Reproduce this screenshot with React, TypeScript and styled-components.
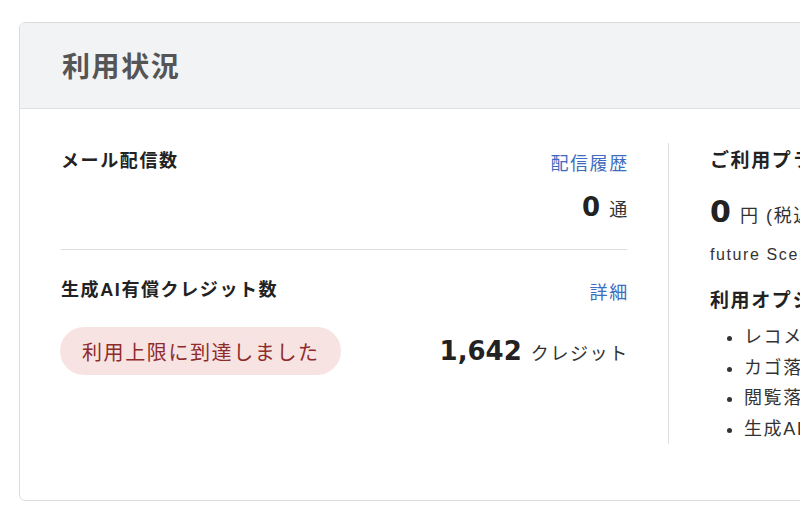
import React from 'react';
import styled, { createGlobalStyle } from 'styled-components';

const GlobalStyle = createGlobalStyle`
  html, body {
    margin: 0;
    padding: 0;
    background: #fff;
    overflow: hidden;
  }
  body {
    font-family: "Liberation Sans", "Noto Sans CJK JP", sans-serif;
    color: #222;
    letter-spacing: 0.1em;
  }
`;

const Page = styled.div`
  padding: 22px 0 0 19px;
  width: 1200px;
`;

const Card = styled.section`
  width: 1100px;
  border: 1px solid #dcdcdc;
  border-radius: 6px;
  background: #fff;
  overflow: hidden;
`;

const CardHeader = styled.header`
  height: 85px;
  display: flex;
  align-items: center;
  padding: 0 42px;
  background: #f2f3f5;
  border-bottom: 1px solid #e0e1e3;
`;

const CardTitle = styled.h2`
  margin: 0 0 2px;
  font-size: 28px;
  font-weight: 700;
  color: #555;
`;

const CardBody = styled.div`
  display: flex;
  padding: 34px 41px 56px;
`;

const LeftCol = styled.div`
  width: 566px;
  flex-shrink: 0;
`;

const ColDivider = styled.div`
  width: 1px;
  background: #dedede;
  margin: 0 41px;
  flex-shrink: 0;
`;

const RightCol = styled.div`
  flex: 1;
`;

const Section = styled.div<{ $first?: boolean }>`
  padding: ${({ $first }) => ($first ? '0 0 24px' : '22px 0 0')};
  border-bottom: ${({ $first }) => ($first ? '1px solid #dedede' : 'none')};
`;

const LabelRow = styled.div`
  height: 32px;
  display: flex;
  justify-content: space-between;
  align-items: center;
`;

const Label = styled.div`
  font-size: 18px;
  font-weight: 700;
  color: #222;
`;

const Link = styled.a`
  font-size: 18px;
  color: #3d6cc0;
  text-decoration: none;
  padding-top: 6px;
  margin-right: -1.8px;
  cursor: pointer;
`;

const ValueRow = styled.div<{ $gap: number }>`
  margin-top: ${({ $gap }) => $gap}px;
  min-height: 36px;
  display: flex;
  align-items: center;
  justify-content: space-between;
`;

const Value = styled.div`
  margin-left: auto;
  margin-right: -1.8px;
  display: flex;
  align-items: baseline;
  gap: 9px;
`;

const Num = styled.span<{ $size?: number }>`
  font-family: "DejaVu Sans", "Liberation Sans", sans-serif;
  font-size: ${({ $size }) => $size ?? 26}px;
  font-weight: 700;
  letter-spacing: 0;
  color: #222;
`;

const Unit = styled.span`
  font-size: 18px;
  color: #333;
`;

const Pill = styled.span`
  display: inline-flex;
  align-items: center;
  height: 48px;
  padding: 0 21px 0 22px;
  margin-left: -1px;
  border-radius: 24px;
  background: #f8e3e3;
  color: #8e2b2b;
  font-size: 20px;
`;

const SubTitle = styled.h3<{ $gap?: number }>`
  margin: ${({ $gap }) => $gap ?? 0}px 0 0;
  font-size: 19px;
  line-height: 36px;
  font-weight: 700;
  color: #222;
  white-space: nowrap;
`;

const PriceRow = styled.div`
  margin-top: 15px;
  height: 40px;
  display: flex;
  align-items: baseline;
  gap: 9px;
  white-space: nowrap;
`;

const Note = styled.div`
  margin-top: 8px;
  font-size: 16px;
  line-height: 26px;
  color: #333;
  white-space: nowrap;
`;

const OptionList = styled.ul`
  margin: 3px 0 0;
  padding-left: 34px;
`;

const OptionItem = styled.li`
  font-size: 18px;
  line-height: 30.5px;
  color: #333;
  white-space: nowrap;
`;

const options = ['レコメンド', 'カゴ落ち', '閲覧落ち', '生成AI'];

export default function App() {
  return (
    <Page>
      <GlobalStyle />
      <Card>
        <CardHeader>
          <CardTitle>利用状況</CardTitle>
        </CardHeader>
        <CardBody>
          <LeftCol>
            <Section $first>
              <LabelRow>
                <Label>メール配信数</Label>
                <Link>配信履歴</Link>
              </LabelRow>
              <ValueRow $gap={14}>
                <Value>
                  <Num>0</Num>
                  <Unit>通</Unit>
                </Value>
              </ValueRow>
            </Section>
            <Section>
              <LabelRow>
                <Label>生成AI有償クレジット数</Label>
                <Link>詳細</Link>
              </LabelRow>
              <ValueRow $gap={23}>
                <Pill>利用上限に到達しました</Pill>
                <Value>
                  <Num>1,642</Num>
                  <Unit>クレジット</Unit>
                </Value>
              </ValueRow>
            </Section>
          </LeftCol>
          <ColDivider />
          <RightCol>
            <SubTitle>ご利用プラン</SubTitle>
            <PriceRow>
              <Num $size={30}>0</Num>
              <Unit>円 (税込)</Unit>
            </PriceRow>
            <Note>future Scene スタンダードプラン</Note>
            <SubTitle $gap={15}>利用オプション</SubTitle>
            <OptionList>
              {options.map((o) => (
                <OptionItem key={o}>{o}</OptionItem>
              ))}
            </OptionList>
          </RightCol>
        </CardBody>
      </Card>
    </Page>
  );
}
